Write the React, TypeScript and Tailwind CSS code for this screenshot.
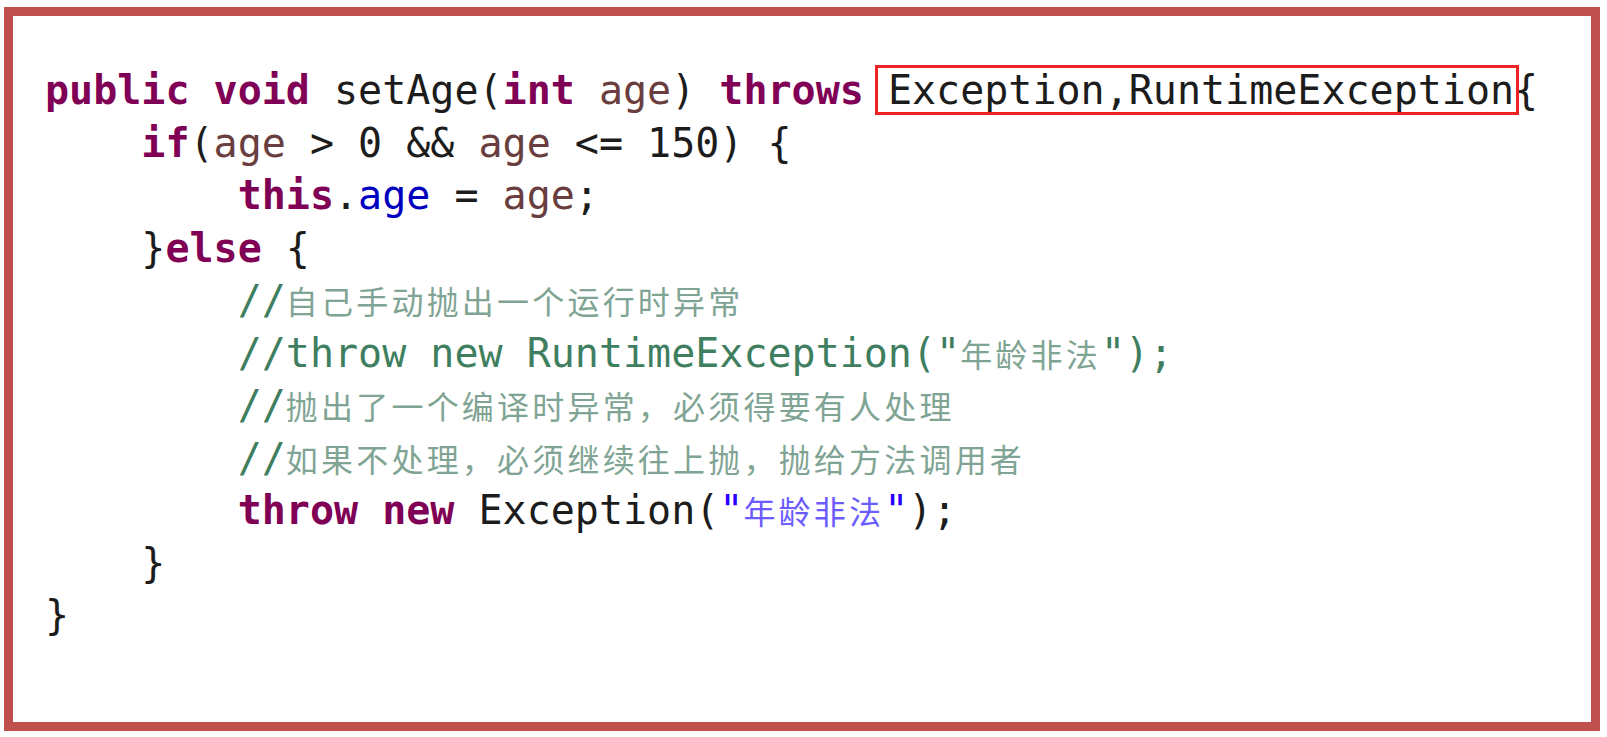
import type { ReactNode } from "react";

const mono = "font-['DejaVu_Sans_Mono','Liberation_Mono',monospace]";
const cjk = "font-['Noto_Sans_CJK_SC',sans-serif] text-[32px] tracking-[3.2px]";

function K({ children }: { children: ReactNode }) {
  return <span className="font-bold text-[#7f0055]">{children}</span>;
}

function P({ children }: { children: ReactNode }) {
  return <span className="text-[#6a3e3e]">{children}</span>;
}

function Line({ children }: { children?: ReactNode }) {
  return <div className="h-[52.5px] leading-[52.5px] whitespace-pre">{children}</div>;
}

function Zh({ children, color }: { children: ReactNode; color: string }) {
  return (
    <span className={cjk} style={{ color }}>
      {children}
    </span>
  );
}

function Comment({ zh }: { zh: string }) {
  return (
    <Line>
      {"        "}
      <span className="text-[#3f7f5f]">//</span>
      <Zh color="#7fa494">{zh}</Zh>
    </Line>
  );
}

export default function App() {
  return (
    <div className="w-full h-[737px] bg-white pt-[7px] pl-[4px]">
      <div
        className={`w-[1596px] h-[724px] border-[9px] border-[#c0504d] pl-[32px] pt-[48px] text-[40px] text-[#1c1c1c] ${mono}`}
      >
        <Line>
          <K>public</K> <K>void</K> setAge(<K>int</K> <P>age</P>) <K>throws</K>{" "}
          <span className="relative">
            Exception,RuntimeException
            <span className="absolute -left-[13px] -right-[5px] -top-[2px] -bottom-[2px] border-[3px] border-[#ee2222]" />
          </span>
          {"{"}
        </Line>
        <Line>
          {"    "}
          <K>if</K>(<P>age</P> &gt; 0 &amp;&amp; <P>age</P> &lt;= 150) {"{"}
        </Line>
        <Line>
          {"        "}
          <K>this</K>.<span className="text-[#0000c0]">age</span> = <P>age</P>;
        </Line>
        <Line>
          {"    }"}
          <K>else</K> {"{"}
        </Line>
        <Comment zh="自己手动抛出一个运行时异常" />
        <Line>
          {"        "}
          <span className="text-[#3f7f5f]">
            //throw new RuntimeException("<Zh color="#7fa494">年龄非法</Zh>");
          </span>
        </Line>
        <Comment zh="抛出了一个编译时异常，必须得要有人处理" />
        <Comment zh="如果不处理，必须继续往上抛，抛给方法调用者" />
        <Line>
          {"        "}
          <K>throw</K> <K>new</K> Exception(
          <span className="text-[#2a00ff]">
            "<Zh color="#6b5cff">年龄非法</Zh>"
          </span>
          );
        </Line>
        <Line>{"    }"}</Line>
        <Line>{"}"}</Line>
      </div>
    </div>
  );
}
